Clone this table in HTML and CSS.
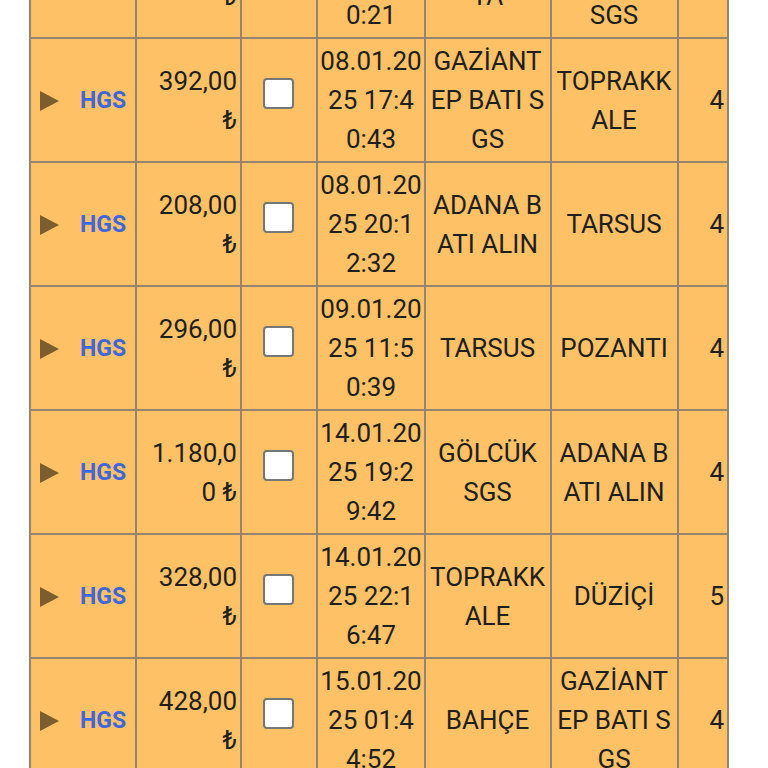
FILE: index.html
```html
<!DOCTYPE html>
<html lang="tr">
<head>
<meta charset="utf-8">
<title>HGS Geçişleri</title>
<link rel="stylesheet" href="styles.css">
</head>
<body>
<div class="viewport">
<table class="passes">
  <colgroup>
    <col class="c-type"><col class="c-amount"><col class="c-check"><col class="c-date"><col class="c-from"><col class="c-to"><col class="c-class">
  </colgroup>
  <tbody>
    <tr>
      <td><div class="type"><svg class="tri" viewBox="0 0 19 20" width="19" height="20"><polygon points="0,0 19,10 0,20"/></svg><a class="hgs" href="#">HGS</a></div></td>
      <td class="amount">276,00 ₺</td>
      <td class="check"><input type="checkbox" class="box"></td>
      <td class="date">07.01.2025 15:30:21</td>
      <td class="place keep">ANTAK YA</td>
      <td class="place">GAZİANTEP KUZEY SGS</td>
      <td class="cls">4</td>
    </tr>
    <tr>
      <td><div class="type"><svg class="tri" viewBox="0 0 19 20" width="19" height="20"><polygon points="0,0 19,10 0,20"/></svg><a class="hgs" href="#">HGS</a></div></td>
      <td class="amount">392,00 ₺</td>
      <td class="check"><input type="checkbox" class="box"></td>
      <td class="date">08.01.2025 17:40:43</td>
      <td class="place">GAZİANTEP BATI SGS</td>
      <td class="place">TOPRAKKALE</td>
      <td class="cls">4</td>
    </tr>
    <tr>
      <td><div class="type"><svg class="tri" viewBox="0 0 19 20" width="19" height="20"><polygon points="0,0 19,10 0,20"/></svg><a class="hgs" href="#">HGS</a></div></td>
      <td class="amount">208,00 ₺</td>
      <td class="check"><input type="checkbox" class="box"></td>
      <td class="date">08.01.2025 20:12:32</td>
      <td class="place">ADANA BATI ALIN</td>
      <td class="place">TARSUS</td>
      <td class="cls">4</td>
    </tr>
    <tr>
      <td><div class="type"><svg class="tri" viewBox="0 0 19 20" width="19" height="20"><polygon points="0,0 19,10 0,20"/></svg><a class="hgs" href="#">HGS</a></div></td>
      <td class="amount">296,00 ₺</td>
      <td class="check"><input type="checkbox" class="box"></td>
      <td class="date">09.01.2025 11:50:39</td>
      <td class="place">TARSUS</td>
      <td class="place">POZANTI</td>
      <td class="cls">4</td>
    </tr>
    <tr>
      <td><div class="type"><svg class="tri" viewBox="0 0 19 20" width="19" height="20"><polygon points="0,0 19,10 0,20"/></svg><a class="hgs" href="#">HGS</a></div></td>
      <td class="amount">1.180,00 ₺</td>
      <td class="check"><input type="checkbox" class="box"></td>
      <td class="date">14.01.2025 19:29:42</td>
      <td class="place">GÖLCÜK SGS</td>
      <td class="place">ADANA BATI ALIN</td>
      <td class="cls">4</td>
    </tr>
    <tr>
      <td><div class="type"><svg class="tri" viewBox="0 0 19 20" width="19" height="20"><polygon points="0,0 19,10 0,20"/></svg><a class="hgs" href="#">HGS</a></div></td>
      <td class="amount">328,00 ₺</td>
      <td class="check"><input type="checkbox" class="box"></td>
      <td class="date">14.01.2025 22:16:47</td>
      <td class="place">TOPRAKKALE</td>
      <td class="place">DÜZİÇİ</td>
      <td class="cls">5</td>
    </tr>
    <tr>
      <td><div class="type"><svg class="tri" viewBox="0 0 19 20" width="19" height="20"><polygon points="0,0 19,10 0,20"/></svg><a class="hgs" href="#">HGS</a></div></td>
      <td class="amount">428,00 ₺</td>
      <td class="check"><input type="checkbox" class="box"></td>
      <td class="date">15.01.2025 01:44:52</td>
      <td class="place">BAHÇE</td>
      <td class="place">GAZİANTEP BATI SGS</td>
      <td class="cls">4</td>
    </tr>
  </tbody>
</table>
</div>
</body>
</html>
```
FILE: styles.css
```css
html, body {
  margin: 0;
  padding: 0;
  background: #ffffff;
}

.viewport {
  height: 768px;
  overflow: hidden;
  padding-left: 29px;
}

.passes {
  border-collapse: collapse;
  table-layout: fixed;
  width: 700px;
  margin-top: -87px;
  font-family: Roboto, "Noto Sans", sans-serif;
}

.c-type { width: 106px; }
.c-amount { width: 105px; }
.c-check { width: 76px; }
.c-date { width: 108px; }
.c-from { width: 126px; }
.c-to { width: 127px; }
.c-class { width: 50px; }

.passes td {
  border: 2px solid #968470;
  background: #ffc166;
  padding: 3px 3px 2px 2px;
  font-size: 26px;
  line-height: 39px;
  color: #1f1f1f;
  word-break: break-all;
  vertical-align: middle;
}

.type {
  display: flex;
  align-items: center;
  gap: 21px;
  padding-left: 7px;
}

.tri {
  display: block;
  fill: #7b5d2e;
  flex: none;
}

.hgs {
  font-size: 23px;
  font-weight: 700;
  color: #3e67dc;
  text-decoration: none;
  line-height: 30px;
}

.amount { text-align: right; }
.passes td.date {
  text-align: center;
  padding-left: 0;
  padding-right: 0;
}
.place { text-align: center; }
.passes td.keep { word-break: keep-all; }
.cls { text-align: right; }
.check { text-align: center; }

.box {
  appearance: none;
  -webkit-appearance: none;
  width: 31px;
  height: 31px;
  margin: 0 0 14px 0;
  border: 2px solid #767676;
  border-radius: 4px;
  background: #ffffff;
  vertical-align: middle;
}
```
